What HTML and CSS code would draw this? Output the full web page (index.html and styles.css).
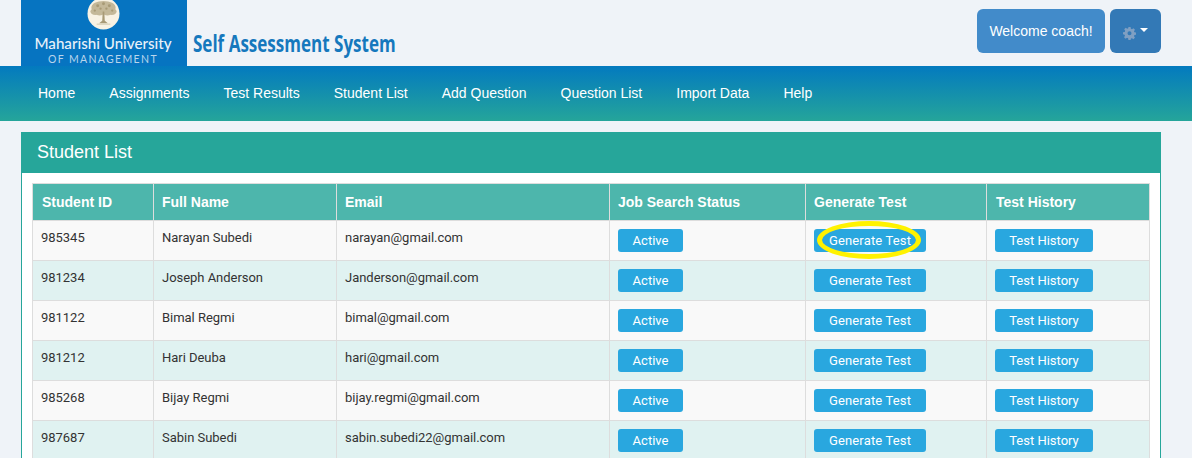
FILE: index.html
```html
<!DOCTYPE html>
<html lang="en">
<head>
<meta charset="utf-8">
<title>Student List</title>
<link rel="stylesheet" href="styles.css">
</head>
<body>
<header class="top">
  <div class="brand">
    <div class="logo">
      <svg class="seal" viewBox="0 0 34 34" aria-hidden="true">
        <circle cx="17" cy="17" r="16.5" fill="#f8f2e4"/>
        <g fill="#c4b899">
          <ellipse cx="17" cy="11" rx="12.500" ry="7"/>
          <ellipse cx="8.500" cy="15" rx="5" ry="3.500"/>
          <ellipse cx="25.500" cy="15" rx="5" ry="3.500"/>
          <ellipse cx="13" cy="17" rx="3.500" ry="2"/>
          <ellipse cx="21" cy="17" rx="3.500" ry="2"/>
        </g>
        <g fill="#a89a76">
          <circle cx="11" cy="9" r="1.500"/><circle cx="17" cy="7" r="1.500"/><circle cx="23" cy="9" r="1.500"/>
          <circle cx="8" cy="14" r="1.200"/><circle cx="14" cy="12" r="1.200"/><circle cx="20" cy="12" r="1.200"/><circle cx="26" cy="14" r="1.200"/>
        </g>
        <path d="M16.200 15h1.600l.5 9.500 3.200 2.500h-9l3.200-2.500z" fill="#a89a76"/>
        <path d="M10 28h14" stroke="#d3c9ad" stroke-width="1"/>
      </svg>
      <div class="uni">Maharishi University</div>
      <div class="mgmt">OF MANAGEMENT</div>
    </div>
    <div class="system"><span>Self Assessment System</span></div>
  </div>
  <div class="user">
    <button class="welcome">Welcome coach!</button>
    <button class="settings" aria-label="Settings">
      <svg class="gear" viewBox="0 0 24 24" aria-hidden="true">
        <path fill="#7f9fc2" d="M10 0h4l.6 3.200 2 .8L19.300 2.200l2.800 2.800-1.800 2.700.8 2 3.200.6v4l-3.200.6-.8 2 1.800 2.700-2.800 2.800-2.700-1.800-2 .8L14 24h-4l-.6-3.200-2-.8-2.700 1.800-2.800-2.800 1.800-2.700-.8-2L0 13.600v-4l3.200-.6.8-2L2.200 4.300 5 1.500l2.700 1.800 2-.8zM12 8a3.700 3.700 0 1 0 0 7.400A3.700 3.700 0 0 0 12 8z"/>
      </svg>
      <span class="caret"></span>
    </button>
  </div>
</header>
<nav class="nav">
  <a>Home</a><a>Assignments</a><a>Test Results</a><a>Student List</a><a>Add Question</a><a>Question List</a><a>Import Data</a><a>Help</a>
</nav>
<main class="panel">
  <h1 class="panel-title">Student List</h1>
  <div class="panel-body">
    <table class="students">
      <colgroup>
        <col class="c-id"><col class="c-name"><col class="c-email"><col class="c-job"><col class="c-gen"><col class="c-hist">
      </colgroup>
      <thead>
        <tr><th>Student ID</th><th>Full Name</th><th>Email</th><th>Job Search Status</th><th>Generate Test</th><th>Test History</th></tr>
      </thead>
      <tbody>
        <tr><td>985345</td><td>Narayan Subedi</td><td>narayan@gmail.com</td><td><a class="btn btn-active">Active</a></td><td><span class="mark-wrap"><a class="btn btn-gen">Generate Test</a><span class="ring"></span></span></td><td><a class="btn btn-hist">Test History</a></td></tr>
        <tr><td>981234</td><td>Joseph Anderson</td><td>Janderson@gmail.com</td><td><a class="btn btn-active">Active</a></td><td><a class="btn btn-gen">Generate Test</a></td><td><a class="btn btn-hist">Test History</a></td></tr>
        <tr><td>981122</td><td>Bimal Regmi</td><td>bimal@gmail.com</td><td><a class="btn btn-active">Active</a></td><td><a class="btn btn-gen">Generate Test</a></td><td><a class="btn btn-hist">Test History</a></td></tr>
        <tr><td>981212</td><td>Hari Deuba</td><td>hari@gmail.com</td><td><a class="btn btn-active">Active</a></td><td><a class="btn btn-gen">Generate Test</a></td><td><a class="btn btn-hist">Test History</a></td></tr>
        <tr><td>985268</td><td>Bijay Regmi</td><td>bijay.regmi@gmail.com</td><td><a class="btn btn-active">Active</a></td><td><a class="btn btn-gen">Generate Test</a></td><td><a class="btn btn-hist">Test History</a></td></tr>
        <tr><td>987687</td><td>Sabin Subedi</td><td>sabin.subedi22@gmail.com</td><td><a class="btn btn-active">Active</a></td><td><a class="btn btn-gen">Generate Test</a></td><td><a class="btn btn-hist">Test History</a></td></tr>
      </tbody>
    </table>
  </div>
</main>
</body>
</html>
```
FILE: styles.css
```css
* { box-sizing: border-box; }
html, body { height: 458px; overflow: hidden; }
body {
  margin: 0;
  background: #eff3f8;
  font-family: "Liberation Sans", Arial, sans-serif;
  color: #333;
}
.top {
  height: 66px;
  display: flex;
  justify-content: space-between;
  padding: 0 31px 0 21px;
}
.brand { display: flex; }
.logo {
  width: 166px;
  height: 66px;
  background: #0674c1;
  color: #fff;
  display: flex;
  flex-direction: column;
  align-items: center;
}
.seal { width: 33px; height: 33px; margin: -3px 2px 0 0; flex: none; }
.uni {
  font-family: Lato, sans-serif;
  font-weight: 500;
  font-size: 15.150px;
  line-height: 16px;
  margin: 5px 2px 0 0;
  color: #e8f1f9;
  white-space: nowrap;
}
.mgmt {
  font-family: Lato, sans-serif;
  font-size: 10.500px;
  line-height: 12px;
  letter-spacing: 1.350px;
  margin: 2px 2px 0 0;
  color: #b9d5ec;
  white-space: nowrap;
}
.system { margin: 30px 0 0 6px; width: 204px; }
.system span {
  display: inline-block;
  font-family: "Open Sans", sans-serif;
  font-weight: 700;
  font-size: 23px;
  line-height: 26px;
  color: #1578bd;
  white-space: nowrap;
  transform: scaleX(0.74);
  transform-origin: left center;
}
.user { display: flex; gap: 5px; padding-top: 9px; }
.user button {
  height: 44px;
  border: 0;
  border-radius: 6px;
  color: #fff;
  font-family: "Liberation Sans", Arial, sans-serif;
  font-size: 14px;
  padding: 0;
}
.welcome { width: 128px; background: #428bca; }
.settings {
  width: 51px;
  background: #3379b6;
  display: flex;
  align-items: center;
  justify-content: center;
  gap: 4px;
}
.gear { width: 13px; height: 13px; margin-top: 5px; }
.caret {
  width: 0;
  height: 0;
  border-left: 4px solid transparent;
  border-right: 4px solid transparent;
  border-top: 4px solid #fff;
  margin-bottom: 3px;
}
.nav {
  height: 55px;
  background: linear-gradient(#037abf, #25a59a);
  display: flex;
  align-items: center;
  gap: 34px;
  padding: 0 0 1px 38px;
}
.nav a { color: #fff; font-size: 14px; line-height: 20px; }
.panel {
  margin: 11px 31px 0 21px;
  border: 1px solid #26a69a;
  border-bottom: 0;
  background: #fff;
  height: 340px;
}
.panel-title {
  margin: 0;
  background: #26a69a;
  color: #fff;
  font-size: 18px;
  font-weight: 400;
  line-height: 38px;
  height: 40px;
  padding-left: 15px;
}
.panel-body { padding: 10px 10px 0; }
.students {
  width: 1117px;
  table-layout: fixed;
  border-collapse: collapse;
  font-family: Roboto, sans-serif;
  font-size: 13px;
}
.c-id { width: 121px; }
.c-name { width: 183px; }
.c-email { width: 273px; }
.c-job { width: 196px; }
.c-gen { width: 181px; }
.c-hist { width: 163px; }
.students th, .students td { border: 1px solid #ddd; }
.students th {
  height: 37px;
  padding: 0 8px 0 8px;
  background: #4db6ac;
  color: #fff;
  text-align: left;
  font-family: "Liberation Sans", Arial, sans-serif;
  font-size: 14px;
  font-weight: 700;
}
.students th:first-child, .students th:last-child { padding-left: 9px; }
.students td { height: 40px; padding: 0 8px 6px; color: #333; letter-spacing: -0.03px; }
.students td:nth-child(n+4) { padding: 0 8px; }
.students tbody tr:nth-child(odd) td { background: #f9f9f9; }
.students tbody tr:nth-child(even) td { background: #e0f2f1; }
.btn {
  display: inline-block;
  height: 23px;
  border-radius: 3px;
  background: #29a7df;
  color: #fff;
  font-family: Roboto, sans-serif;
  font-size: 13px;
  line-height: 23px;
  letter-spacing: 0;
  text-align: center;
  vertical-align: middle;
}
.btn-active { width: 65px; }
.btn-gen { width: 112px; letter-spacing: 0.15px; }
.btn-hist { width: 98px; }
.mark-wrap { position: relative; display: inline-block; vertical-align: middle; }
.mark-wrap .btn { display: block; }
.ring {
  position: absolute;
  left: 3px;
  top: -8px;
  width: 104px;
  height: 38px;
  border: 5px solid #fff200;
  border-radius: 50%;
}
```
